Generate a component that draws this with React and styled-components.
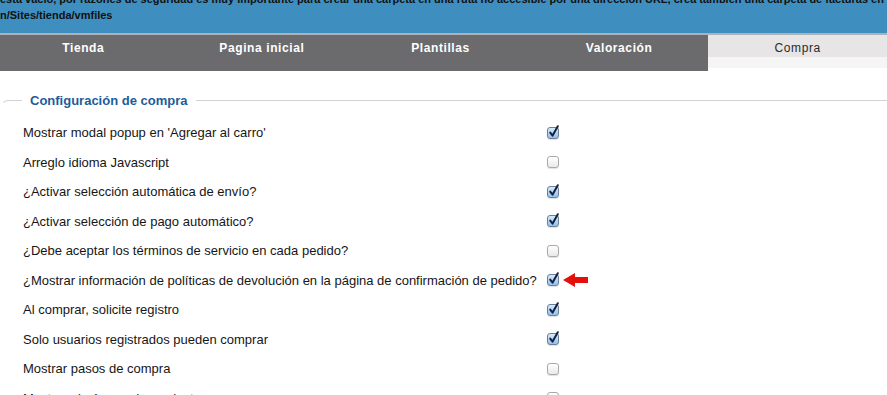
import React from "react";
import styled, { createGlobalStyle } from "styled-components";

const GlobalStyle = createGlobalStyle`
  html, body {
    margin: 0;
    padding: 0;
    background: #ffffff;
    overflow: hidden;
  }
  body {
    font-family: "Liberation Sans", Arial, Helvetica, sans-serif;
    width: 887px;
    height: 395px;
  }
`;

// Notice bar
const Notice = styled.div`
  height: 33px;
  overflow: hidden;
  background: #3e8fbf;
  border-bottom: 2px solid #aeb1b5;
  color: #111;
  font-size: 11px;
  font-weight: bold;
  line-height: 16px;
  white-space: nowrap;
`;

const NoticeLine = styled.div`
  margin-top: ${(p) => (p.first ? "-9px" : "0")};
`;

// Tabs
const TabBar = styled.div`
  display: grid;
  grid-template-columns: repeat(5, 1fr);
  width: 893px;
  margin-left: -6px;
  align-items: start;
`;

const Tab = styled.div`
  height: ${(p) => (p.active ? "33px" : "36px")};
  box-sizing: border-box;
  padding-top: 6px;
  text-align: center;
  font-size: 12px;
  line-height: 15px;
  letter-spacing: 0.6px;
  font-weight: ${(p) => (p.active ? "normal" : "bold")};
  color: ${(p) => (p.active ? "#2b2b2b" : "#ffffff")};
  background: ${(p) =>
    p.active
      ? "linear-gradient(#e7e5e5 0, #e7e5e5 22px, #f5f5f5 22px, #f5f5f5 100%)"
      : "#6b6b6e"};
`;

// Fieldset
const Fieldset = styled.fieldset`
  margin: 22px -20px 0 1px;
  padding: 0 0 0 20px;
  border: 1px solid #d2d2d2;
  border-left-color: transparent;
  border-right: none;
  border-bottom: none;
  border-top-left-radius: 7px;
`;

const Legend = styled.legend`
  padding: 0 9px 0 8px;
  font-size: 13px;
  font-weight: bold;
  color: #1d5c9b;
  line-height: 15px;
`;

const Rows = styled.div`
  display: grid;
  grid-template-columns: 524px auto;
  grid-auto-rows: 29.5px;
  align-items: center;
  margin-top: 10px;
  padding-left: 1px;
`;

const Label = styled.div`
  font-size: 13px;
  color: #161616;
  white-space: nowrap;
`;

const Cell = styled.div`
  display: flex;
  align-items: center;
  gap: 4px;
`;

const Box = styled.span`
  position: relative;
  display: inline-block;
  width: 12px;
  height: 12px;
  box-sizing: border-box;
  border-radius: 3px;
  border: 1px solid ${(p) => (p.checked ? "#6d7f96" : "#a9a9a9")};
  background: ${(p) =>
    p.checked
      ? "linear-gradient(#d6eafc, #8fc2ef)"
      : "linear-gradient(#ffffff, #e9e9e9)"};
  box-shadow: 0 1px 1px rgba(0, 0, 0, 0.12);

  svg {
    position: absolute;
    left: 0;
    top: -3px;
    overflow: visible;
  }
`;

function Checkbox({ checked }) {
  return (
    <Box checked={checked}>
      {checked && (
        <svg width="12" height="13" viewBox="0 0 12 13">
          <path
            d="M2.2 7.6 L4.6 10.6 L9.8 1.2"
            fill="none"
            stroke="#16203a"
            strokeWidth="2"
            strokeLinecap="round"
            strokeLinejoin="round"
          />
        </svg>
      )}
    </Box>
  );
}

function Arrow() {
  return (
    <svg width="25" height="14" viewBox="0 0 25 14">
      <path d="M0 7 L12 0 L12 4 L25 4 L25 10 L12 10 L12 14 Z" fill="#e4100c" />
    </svg>
  );
}

const tabs = ["Tienda", "Pagina inicial", "Plantillas", "Valoración", "Compra"];

const options = [
  { label: "Mostrar modal popup en 'Agregar al carro'", checked: true },
  { label: "Arreglo idioma Javascript", checked: false },
  { label: "¿Activar selección automática de envío?", checked: true },
  { label: "¿Activar selección de pago automático?", checked: true },
  { label: "¿Debe aceptar los términos de servicio en cada pedido?", checked: false },
  {
    label: "¿Mostrar información de políticas de devolución en la página de confirmación de pedido?",
    checked: true,
    marked: true,
  },
  { label: "Al comprar, solicite registro", checked: true },
  { label: "Solo usuarios registrados pueden comprar", checked: true },
  { label: "Mostrar pasos de compra", checked: false },
  { label: "Mostrar el número de productos", checked: false },
];

export default function App() {
  return (
    <>
      <GlobalStyle />
      <Notice>
        <NoticeLine first>
          esta vacío, por razones de seguridad es muy importante para crear una carpeta en una ruta no accesible por una dirección URL, crea tambien una carpeta de facturas en
        </NoticeLine>
        <NoticeLine>n/Sites/tienda/vmfiles</NoticeLine>
      </Notice>

      <TabBar>
        {tabs.map((t) => (
          <Tab key={t} active={t === "Compra"}>
            {t}
          </Tab>
        ))}
      </TabBar>

      <Fieldset>
        <Legend>Configuración de compra</Legend>
        <Rows>
          {options.map((o) => (
            <React.Fragment key={o.label}>
              <Label>{o.label}</Label>
              <Cell>
                <Checkbox checked={o.checked} />
                {o.marked && <Arrow />}
              </Cell>
            </React.Fragment>
          ))}
        </Rows>
      </Fieldset>
    </>
  );
}
